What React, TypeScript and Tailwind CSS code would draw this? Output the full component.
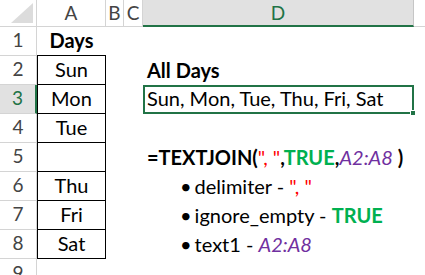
import React from 'react';

const font = { fontFamily: 'Lato, "Open Sans", sans-serif' };

const hdr = 'h-[27px] flex items-center justify-center pt-[1px] text-[19px] text-[#444] border-r border-b border-[#d4d4d4] bg-white';
const rowHdr = 'h-[29px] flex items-end justify-center pb-[3px] text-[19px] leading-[24px] text-[#444] border-r border-b border-[#d4d4d4] bg-white';
const cell = 'h-[29px] flex items-end pb-[3px] text-[20px] leading-[24px] text-black';
const aCell = `${cell} justify-center border-l border-r border-b border-black`;

const days = ['Sun', 'Mon', 'Tue', '', 'Thu', 'Fri', 'Sat'];

function Red({ children }: { children: React.ReactNode }) {
  return <span className="text-[#ff0000] font-normal">{children}</span>;
}
function Green({ children }: { children: React.ReactNode }) {
  return <span className="text-[#00b050] font-bold">{children}</span>;
}
function Purple({ children }: { children: React.ReactNode }) {
  return <span className="text-[#7030a0] italic font-normal">{children}</span>;
}

function Bullet({ children }: { children: React.ReactNode }) {
  return (
    <div className="flex items-baseline pl-[37px] gap-[3px]">
      <span className="text-[20px] leading-[24px]">•</span>
      <span>{children}</span>
    </div>
  );
}

export default function App() {
  const colD: React.ReactNode[] = [
    <span className="font-bold pl-[4px]">Days</span>,
    <span className="font-bold pl-[4px]">All Days</span>,
    null,
    null,
    <span className="font-bold pl-[4px]">
      =TEXTJOIN(<Red>", "</Red>,<Green>TRUE</Green>,<Purple>A2:A8</Purple> )
    </span>,
    <Bullet>
      delimiter - <Red>", "</Red>
    </Bullet>,
    <Bullet>
      ignore_empty - <Green>TRUE</Green>
    </Bullet>,
    <Bullet>
      text1 - <Purple>A2:A8</Purple>
    </Bullet>,
  ];

  return (
    <div className="w-[425px] h-[275px] overflow-hidden bg-white" style={font}>
      <div className="grid grid-cols-[37px_69px_18px_19px_271px_11px]">
        {/* header row */}
        <div className="h-[27px] relative border-r border-b border-[#d4d4d4] bg-white">
          <div className="absolute right-[3px] bottom-[3px] w-0 h-0 border-l-[22px] border-l-transparent border-b-[20px] border-b-[#dcdcdc]" />
        </div>
        <div className={hdr}>A</div>
        <div className={hdr}>B</div>
        <div className={hdr}>C</div>
        <div className="h-[27px] flex items-center justify-center pt-[1px] text-[19px] text-[#217346] bg-[#e1e1e1] border-r border-[#c6c6c6] border-b-2 border-b-[#217346]">
          D
        </div>
        <div className="h-[27px] border-b border-[#d4d4d4] bg-white" />

        {/* row 1 */}
        <div className={rowHdr}>1</div>
        <div className={`${cell} justify-center font-bold border-b border-black`}>Days</div>
        <div className={cell} />
        <div className={cell} />
        <div className={cell} />
        <div className={cell} />

        {days.map((d, i) => {
          const r = i + 2;
          const sel = r === 3;
          return (
            <React.Fragment key={r}>
              <div
                className={
                  sel
                    ? 'h-[29px] flex items-end justify-center pb-[3px] text-[19px] leading-[24px] text-[#217346] bg-[#e1e1e1] border-r-2 border-r-[#217346] border-b border-[#d4d4d4]'
                    : rowHdr
                }
              >
                {r}
              </div>
              <div className={aCell}>{d}</div>
              <div className={cell} />
              <div className={cell} />
              {sel ? (
                <div className="h-[29px] relative flex items-end pb-[2px] pl-[2px] text-[20px] leading-[24px] text-black border-2 border-[#217346]">
                  Sun, Mon, Tue, Thu, Fri, Sat
                  <div className="absolute -right-[4px] -bottom-[4px] w-[6px] h-[6px] bg-[#217346] border border-white" />
                </div>
              ) : (
                <div className={cell}>{colD[r - 1]}</div>
              )}
              <div className={cell} />
            </React.Fragment>
          );
        })}

        {/* row 9 */}
        <div className="h-[29px] flex items-end justify-center pb-[3px] text-[19px] leading-[24px] text-[#444] border-r border-[#d4d4d4]">9</div>
        <div className={cell} />
        <div className={cell} />
        <div className={cell} />
        <div className={cell} />
        <div className={cell} />
      </div>
    </div>
  );
}
